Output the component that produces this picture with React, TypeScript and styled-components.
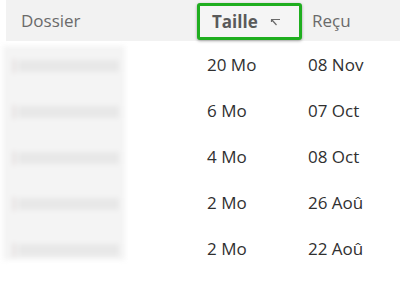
import React from "react";
import styled, { createGlobalStyle } from "styled-components";

const Global = createGlobalStyle`
  html, body { margin: 0; padding: 0; background: #ffffff; }
  body { font-family: "Open Sans", "Noto Sans", sans-serif; }
`;

const Page = styled.div`
  width: 400px;
  height: 283px;
  overflow: hidden;
  background: #ffffff;
`;

const Header = styled.div`
  display: flex;
  align-items: center;
  height: 41px;
  margin-left: 6px;
  background: #f2f2f2;
`;

const HeaderCell = styled.div<{ $width?: number; $pad: number }>`
  box-sizing: border-box;
  width: ${(p) => (p.$width ? `${p.$width}px` : "auto")};
  padding-left: ${(p) => p.$pad}px;
  font-size: 17px;
  color: #6a6a6a;
  line-height: 22px;
`;

const SortCell = styled.div`
  box-sizing: border-box;
  display: flex;
  align-items: center;
  gap: 12px;
  width: 105px;
  height: 37px;
  margin-top: 1px;
  padding-left: 12px;
  border: 3px solid #1fae1f;
  border-radius: 3px;
  background: #f5f5f5;
  box-shadow: 0 1px 3px rgba(0, 0, 0, 0.35);
  font-size: 17px;
  font-weight: 700;
  color: #5a5a5a;
`;

const Body = styled.div`
  display: grid;
  grid-template-columns: 207px 101px 1fr;
  grid-auto-rows: 46px;
`;

const BlurPanel = styled.div`
  grid-column: 1;
  grid-row: 1 / span 5;
  margin: 5px 82px 11px 3px;
  background: #f4f4f4;
  filter: blur(2.5px);
  display: flex;
  flex-direction: column;
  padding-top: 13px;
  overflow: hidden;
`;

const BlurLine = styled.div`
  flex: 0 0 46px;
  display: flex;
  align-items: flex-start;
  gap: 3px;
  padding-left: 10px;
`;

const BlurTick = styled.div`
  width: 2px;
  height: 14px;
  background: #ddd5d5;
`;

const BlurBar = styled.div`
  flex: 1;
  height: 12px;
  margin-top: 1px;
  margin-right: 6px;
  background: #e8e8e8;
`;

const Cell = styled.div`
  display: flex;
  align-items: center;
  font-size: 17px;
  color: #303030;
  white-space: nowrap;
`;

const rows = [
  ["20 Mo", "08 Nov"],
  ["6 Mo", "07 Oct"],
  ["4 Mo", "08 Oct"],
  ["2 Mo", "26 Aoû"],
  ["2 Mo", "22 Aoû"],
];

const SortIcon = () => (
  <svg width="11" height="8" viewBox="0 0 11 8" style={{ marginTop: 1 }}>
    <path
      d="M1 1.5 H10 M1.5 1.5 V4 M2 2 L6.5 7"
      stroke="#6a6a6a"
      strokeWidth="1.2"
      fill="none"
    />
  </svg>
);

export default function App() {
  return (
    <Page>
      <Global />
      <Header>
        <HeaderCell $width={191} $pad={15}>
          Dossier
        </HeaderCell>
        <SortCell>
          <span>Taille</span>
          <SortIcon />
        </SortCell>
        <HeaderCell $pad={10}>Reçu</HeaderCell>
      </Header>
      <Body>
        <BlurPanel>
          {rows.map((_, i) => (
            <BlurLine key={i}>
              <BlurTick />
              <BlurBar />
            </BlurLine>
          ))}
        </BlurPanel>
        {rows.map(([size, date], i) => (
          <React.Fragment key={i}>
            <Cell style={{ gridColumn: 2, gridRow: i + 1 }}>{size}</Cell>
            <Cell style={{ gridColumn: 3, gridRow: i + 1 }}>{date}</Cell>
          </React.Fragment>
        ))}
      </Body>
    </Page>
  );
}
